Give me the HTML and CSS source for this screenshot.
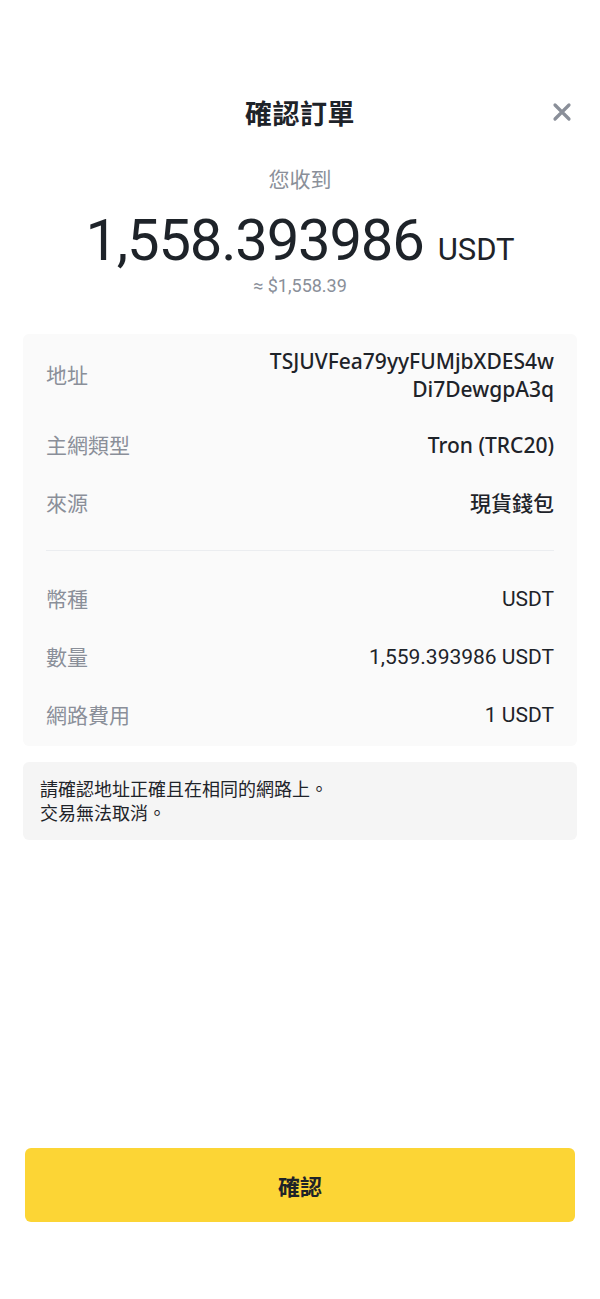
FILE: index.html
```html
<!DOCTYPE html>
<html lang="zh-Hant">
<head>
    <meta charset="UTF-8">
    <meta name="viewport" content="width=device-width, initial-scale=1.0">
    <title>確認訂單</title>
    <link rel="stylesheet" href="styles.css">
</head>
<body>
    <div class="sheet">
        <div class="header">
            <h1 class="title">確認訂單</h1>
            <span class="close">
                <svg width="20" height="20" viewBox="0 0 20 20"><path d="M3 3 L17 17 M17 3 L3 17" stroke="#8a8f99" stroke-width="3.2" stroke-linecap="round"/></svg>
            </span>
        </div>

        <div class="summary">
            <p class="receive-label">您收到</p>
            <p class="amount"><span class="amount-num">1,558.393986</span><span class="amount-unit">USDT</span></p>
            <p class="approx">≈ $1,558.39</p>
        </div>

        <div class="card">
            <div class="row">
                <span class="label">地址</span>
                <span class="value address">TSJUVFea79yyFUMjbXDES4w<br>Di7DewgpA3q</span>
            </div>
            <div class="row">
                <span class="label">主網類型</span>
                <span class="value">Tron (TRC20)</span>
            </div>
            <div class="row">
                <span class="label">來源</span>
                <span class="value">現貨錢包</span>
            </div>
            <div class="divider"></div>
            <div class="row">
                <span class="label">幣種</span>
                <span class="value num">USDT</span>
            </div>
            <div class="row">
                <span class="label">數量</span>
                <span class="value num">1,559.393986 USDT</span>
            </div>
            <div class="row">
                <span class="label">網路費用</span>
                <span class="value num">1 USDT</span>
            </div>
        </div>

        <div class="notice">
            請確認地址正確且在相同的網路上。<br>
            交易無法取消。
        </div>

        <div class="spacer"></div>

        <button class="confirm">確認</button>
    </div>
</body>
</html>
```

FILE: styles.css
```css
/* general styling */
* {
box-sizing: border-box;
margin: 0;
padding: 0;
}

html, body {
height: 100%;
margin: 0;
}

body {
background-color: #fff;
color: #1e2329;
font-family: "Noto Sans", "Noto Sans CJK TC", sans-serif;
}

.sheet {
display: flex;
flex-direction: column;
min-height: 100%;
padding: 0 23px 77px;
}

.header {
align-items: center;
display: flex;
height: 44px;
justify-content: center;
margin-top: 90px;
position: relative;
}

.title {
font-size: 27px;
font-weight: 700;
letter-spacing: .5px;
}

.close {
display: flex;
position: absolute;
right: 5px;
top: 12px;
}

.summary {
margin-top: 30px;
text-align: center;
}

.receive-label {
color: #8a8f99;
font-size: 21px;
line-height: 30px;
}

.amount {
align-items: baseline;
display: flex;
justify-content: center;
line-height: 64px;
margin-top: 14px;
}

.amount-num {
font-family: Roboto, "Noto Sans CJK TC", sans-serif;
font-size: 58px;
letter-spacing: -1.2px;
}

.amount-unit {
font-family: Roboto, "Noto Sans CJK TC", sans-serif;
font-size: 31px;
margin-left: 14px;
}

.approx {
color: #8a8f99;
font-family: Roboto, sans-serif;
font-size: 18px;
line-height: 22px;
margin-top: -7px;
}

.card {
background-color: #fafafa;
border-radius: 6px;
margin-top: 37px;
padding: 13px 23px 2px;
}

.row {
align-items: center;
display: flex;
justify-content: space-between;
padding: 15px 0;
}

.row:first-child {
padding: 0 0 13px;
}

.label {
color: #8a8f99;
font-size: 21px;
line-height: 28px;
}

.value {
font-size: 21px;
font-weight: 500;
line-height: 28px;
text-align: right;
}

.value.num {
font-family: Roboto, sans-serif;
font-weight: 400;
}

.divider {
border-top: 1px solid #ebedf0;
margin: 18px 0 19px;
}

.notice {
background-color: #f5f5f5;
border-radius: 6px;
font-size: 18px;
line-height: 24px;
margin-top: 16px;
padding: 15px 17px;
}

.spacer {
flex: 1;
}

.confirm {
background-color: #fcd535;
border: none;
border-radius: 6px;
color: #1e2329;
font-family: "Noto Sans CJK TC", sans-serif;
font-size: 22px;
font-weight: 700;
height: 74px;
margin: 0 2px;
}
```
